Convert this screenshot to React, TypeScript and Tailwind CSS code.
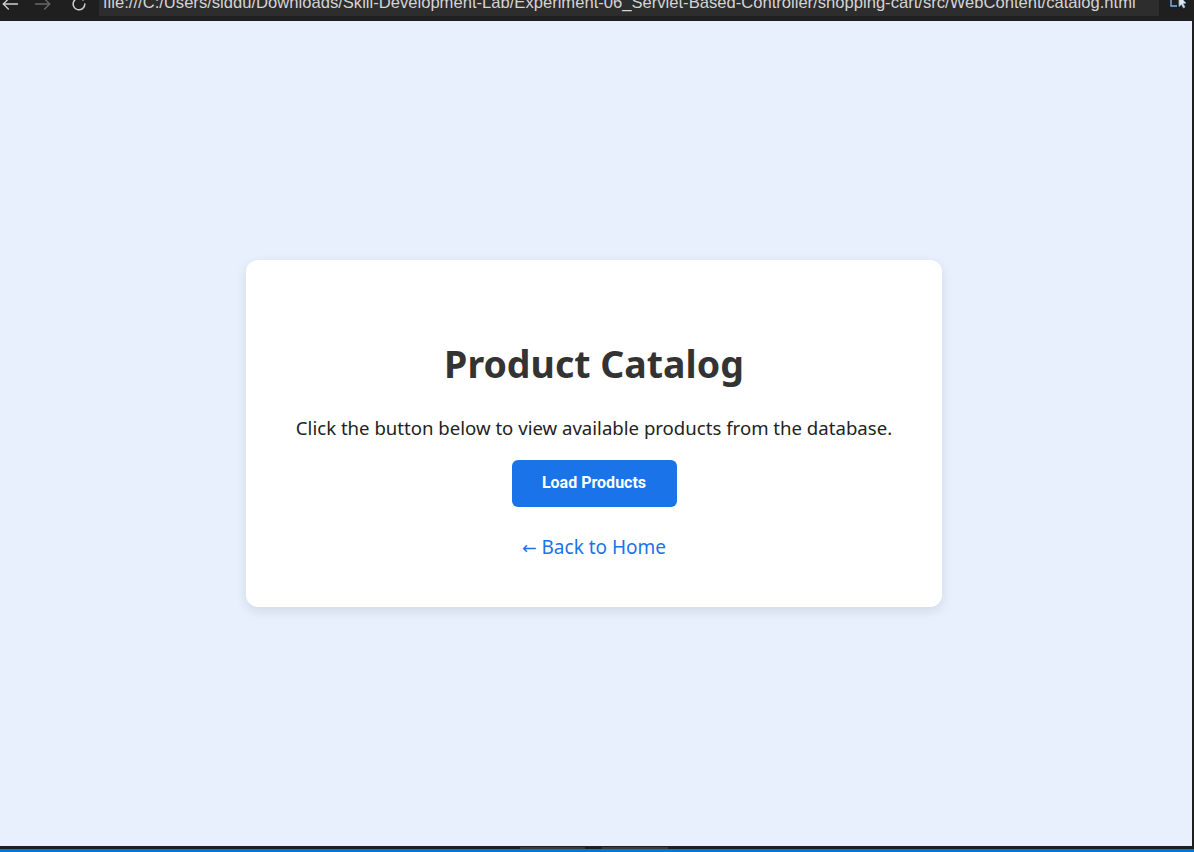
import React from "react";

export default function App() {
  return (
    <div className="w-[1194px] h-[852px] flex flex-col bg-[#1f1f1f] overflow-hidden">
      {/* browser toolbar (cropped) */}
      <div className="h-[21px] flex items-start shrink-0 overflow-hidden">
        <div className="w-[99px] h-[16px] relative overflow-hidden">
          <svg className="absolute left-[0px] top-[-6px]" width="20" height="20" viewBox="0 0 24 24" fill="none" stroke="#d0d0d0" strokeWidth="1.6" strokeLinecap="round" strokeLinejoin="round">
            <path d="M21 12H4" />
            <path d="M10 6l-6 6 6 6" />
          </svg>
          <svg className="absolute left-[33px] top-[-6px]" width="20" height="20" viewBox="0 0 24 24" fill="none" stroke="#6a6a6a" strokeWidth="1.6" strokeLinecap="round" strokeLinejoin="round">
            <path d="M3 12h17" />
            <path d="M14 6l6 6-6 6" />
          </svg>
          <svg className="absolute left-[69px] top-[-6px]" width="20" height="20" viewBox="0 0 24 24" fill="none" stroke="#d0d0d0" strokeWidth="1.8" strokeLinecap="round">
            <path d="M19 12a7 7 0 1 1-2.05-4.95" />
          </svg>
        </div>
        <div className="w-[1060px] h-[16px] bg-[#2d2d2d] overflow-hidden relative">
          <div className="absolute left-[4px] top-[-5px] whitespace-nowrap text-[16.6px] leading-[16px] text-[#d4d4d4] font-['Liberation_Sans',Arial,sans-serif]">
            file:///C:/Users/siddu/Downloads/Skill-Development-Lab/Experiment-06_Servlet-Based-Controller/shopping-cart/src/WebContent/catalog.html
          </div>
        </div>
        <div className="flex-1 h-[16px] relative">
          <svg className="absolute left-[10px] top-[-6px]" width="20" height="16" viewBox="0 0 20 16" fill="none">
            <path d="M2 2v10h6" stroke="#7fb6e8" strokeWidth="1.4" />
            <path d="M10 2l7 7-3 0.5 2 3.5-1.5 1-2-3.5-2.5 2z" fill="#e8e8e8" stroke="#7fb6e8" strokeWidth="0.8" />
          </svg>
        </div>
      </div>

      {/* page */}
      <div className="flex-1 flex min-h-0">
        <div className="flex-1 bg-[#e8f0fe] flex items-center justify-center pr-[4px]">
          <div className="w-[696px] h-[347px] bg-white rounded-[12px] shadow-[0_4px_12px_rgba(0,0,0,0.10)] flex flex-col items-center justify-center font-['Noto_Sans',sans-serif] pt-[32px]">
            <h1 className="text-[37.5px] leading-[48px] font-bold text-[#333333] m-0">Product Catalog</h1>
            <p className="mt-[28px] text-[18.6px] leading-[24px] text-[#222222]">
              Click the button below to view available products from the database.
            </p>
            <button className="mt-[20px] w-[165px] h-[47px] rounded-[6px] bg-[#1a73e8] text-white text-[16px] font-bold font-['Roboto',Arial,sans-serif]">
              Load Products
            </button>
            <a className="mt-[28px] text-[19px] leading-[24px] text-[#1a73e8] cursor-pointer">
              <span className="font-['DejaVu_Sans',sans-serif] text-[17.5px]">←</span> Back to Home
            </a>
          </div>
        </div>
        <div className="w-[2px] bg-[#1f1f1f]" />
      </div>

      {/* bottom */}
      <div className="h-[3px] shrink-0 bg-[#1f1f1f] relative">
        <div className="absolute left-[520px] top-[1px] w-[65px] h-[2px] bg-[#3a3a3a]" />
        <div className="absolute left-[602px] top-[1px] w-[66px] h-[2px] bg-[#3a3a3a]" />
      </div>
      <div className="h-[3px] shrink-0 bg-[#0078d4]" />
    </div>
  );
}
